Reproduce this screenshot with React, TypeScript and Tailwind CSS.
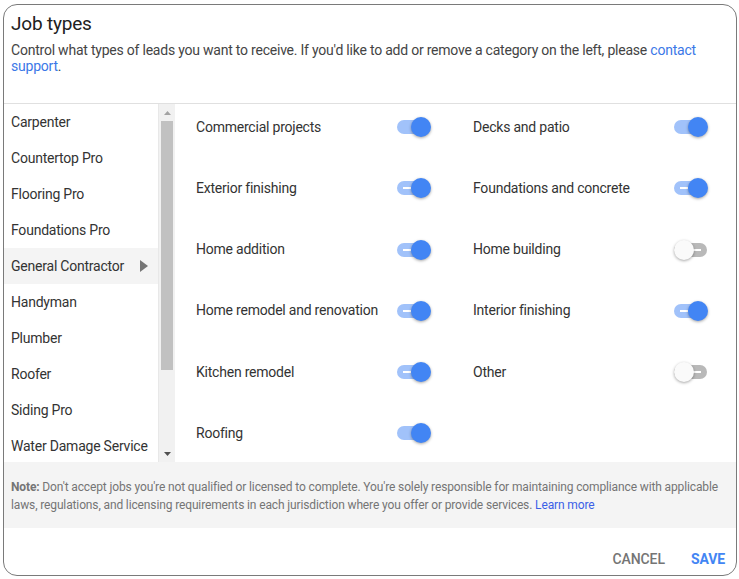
import React from 'react';

const categories = [
  'Carpenter',
  'Countertop Pro',
  'Flooring Pro',
  'Foundations Pro',
  'General Contractor',
  'Handyman',
  'Plumber',
  'Roofer',
  'Siding Pro',
  'Water Damage Service',
];

type Job = { label: string; on: boolean; mark: boolean };

const jobs: Job[] = [
  { label: 'Commercial projects', on: true, mark: false },
  { label: 'Decks and patio', on: true, mark: false },
  { label: 'Exterior finishing', on: true, mark: true },
  { label: 'Foundations and concrete', on: true, mark: true },
  { label: 'Home addition', on: true, mark: true },
  { label: 'Home building', on: false, mark: true },
  { label: 'Home remodel and renovation', on: true, mark: true },
  { label: 'Interior finishing', on: true, mark: true },
  { label: 'Kitchen remodel', on: true, mark: true },
  { label: 'Other', on: false, mark: true },
  { label: 'Roofing', on: true, mark: false },
];

const Toggle = ({ on, mark }: { on: boolean; mark: boolean }) => (
  <div className="relative w-[34px] h-[20px] flex items-center">
    <div
      className={
        on
          ? 'w-[33px] h-[14px] rounded-full bg-[#a1c2fa] flex items-center pl-[6px]'
          : 'w-[33px] h-[14px] rounded-full bg-[#b9b9b9] flex items-center justify-end pr-[6px]'
      }
    >
      {mark && <div className="w-[8px] h-[2px] bg-white" />}
    </div>
    <div
      className={
        on
          ? 'absolute right-0 top-0 w-[20px] h-[20px] rounded-full bg-[#4285f4] shadow-[0_1px_3px_rgba(0,0,0,0.35)]'
          : 'absolute left-0 top-0 w-[20px] h-[20px] rounded-full bg-[#fafafa] shadow-[0_1px_3px_rgba(0,0,0,0.35)]'
      }
    />
  </div>
);

const App = () => {
  return (
    <div className="w-[739px] h-[579px] bg-white pl-[3px] pt-[4px]" style={{ fontFamily: 'Roboto, "Liberation Sans", sans-serif' }}>
      <div className="w-[734px] h-[572px] border border-[#7a7a7a] rounded-[14px] overflow-hidden flex flex-col bg-white">
        {/* Header */}
        <div className="h-[99px] px-[7px] pt-[7px] border-b border-[#e0e0e0] shrink-0">
          <h1 className="text-[19px] leading-[24px] tracking-[-0.2px] text-[#212121]">Job types</h1>
          <p className="mt-[6px] text-[14px] leading-[16px] tracking-[-0.22px] text-[#444]">
            Control what types of leads you want to receive. If you'd like to add or remove a category on the left, please{' '}
            <span className="text-[#3b78e7]">contact support</span>.
          </p>
        </div>

        {/* Body */}
        <div className="flex h-[358px] shrink-0">
          <div className="w-[154px] overflow-hidden">
            {categories.map((c) => (
              <div
                key={c}
                className={
                  c === 'General Contractor'
                    ? 'h-[36px] shrink-0 flex items-center justify-between pl-[7px] pr-[10px] bg-[#f4f4f4] text-[14px] tracking-[-0.22px] text-[#333]'
                    : 'h-[36px] shrink-0 flex items-center pl-[7px] text-[14px] tracking-[-0.22px] text-[#333]'
                }
              >
                <span>{c}</span>
                {c === 'General Contractor' && (
                  <svg width="8" height="12" viewBox="0 0 8 12">
                    <path d="M0 0 L8 6 L0 12 Z" fill="#757575" />
                  </svg>
                )}
              </div>
            ))}
          </div>

          {/* Scrollbar */}
          <div className="w-[17px] bg-[#f1f1f1] border-l border-[#e8e8e8] flex flex-col">
            <div className="h-[17px] flex items-center justify-center">
              <svg width="7" height="4" viewBox="0 0 7 4">
                <path d="M3.5 0 L7 4 L0 4 Z" fill="#a3a3a3" />
              </svg>
            </div>
            <div className="mx-[2px] h-[249px] bg-[#c1c1c1]" />
            <div className="flex-1" />
            <div className="h-[17px] flex items-center justify-center">
              <svg width="7" height="4" viewBox="0 0 7 4">
                <path d="M0 0 L7 0 L3.5 4 Z" fill="#505050" />
              </svg>
            </div>
          </div>

          {/* Job toggles */}
          <div className="flex-1 pl-[21px] grid grid-cols-[235px_235px] gap-x-[42px] gap-y-[15.25px] content-start">
            {jobs.map((j) => (
              <div key={j.label} className="h-[46px] flex items-center justify-between">
                <span className="text-[14px] tracking-[-0.22px] text-[#333]">{j.label}</span>
                <Toggle on={j.on} mark={j.mark} />
              </div>
            ))}
          </div>
        </div>

        {/* Note */}
        <div className="h-[66px] shrink-0 bg-[#f4f4f4] px-[7px] pt-[16px] text-[12px] leading-[18px] tracking-[-0.13px] text-[#757575]">
          <span className="font-bold">Note:</span> Don't accept jobs you're not qualified or licensed to complete. You're solely responsible for maintaining compliance with applicable laws, regulations, and licensing requirements in each jurisdiction where you offer or provide services.{' '}
          <span className="text-[#3b5fe7]">Learn more</span>
        </div>

        {/* Footer */}
        <div className="flex-1 flex items-end justify-end gap-[26px] pr-[11px] pb-[8px]">
          <button className="text-[14px] leading-[16px] font-medium tracking-[-0.1px] text-[#757575] uppercase">Cancel</button>
          <button className="text-[14px] leading-[16px] font-bold tracking-[-0.1px] text-[#4285f4] uppercase">Save</button>
        </div>
      </div>
    </div>
  );
};

export default App;
